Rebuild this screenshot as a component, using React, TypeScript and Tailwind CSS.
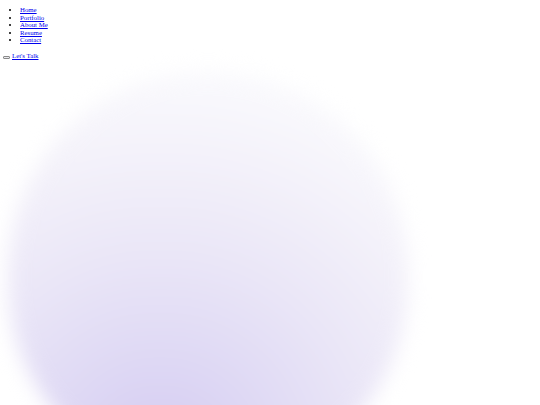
export default function App() {
  const links = ["Home", "Portfolio", "About Me", "Resume", "Contact"];
  return (
    <div className="h-screen overflow-hidden bg-white font-['Liberation_Serif',serif] text-[6.8px] leading-[7.5px] text-black">
      <nav>
        <ul className="list-disc pl-5 mt-[6px] mb-2">
          {links.map((l) => (
            <li key={l}>
              <a href="#" className="text-[#0000ee] underline">{l}</a>
            </li>
          ))}
        </ul>
        <div className="flex items-end gap-[2px] pl-[3px]">
          <button className="w-[7px] h-[3px] mb-[0px] rounded-[1px] border-[0.5px] border-[#8a8a8a] bg-[#e9e9ed]"></button>
          <a href="#" className="text-[#0000ee] underline">Let's Talk</a>
        </div>
      </nav>
      <div className="ml-[8px] mt-[12px] w-[400px] h-[412px] rounded-full blur-[10px] bg-[radial-gradient(circle_at_38%_95%,#d3c9f1_0%,#ded8f4_22%,#eae6f7_45%,#f4f2fa_68%,#fafafd_85%,#fefeff_100%)]"></div>
    </div>
  );
}
